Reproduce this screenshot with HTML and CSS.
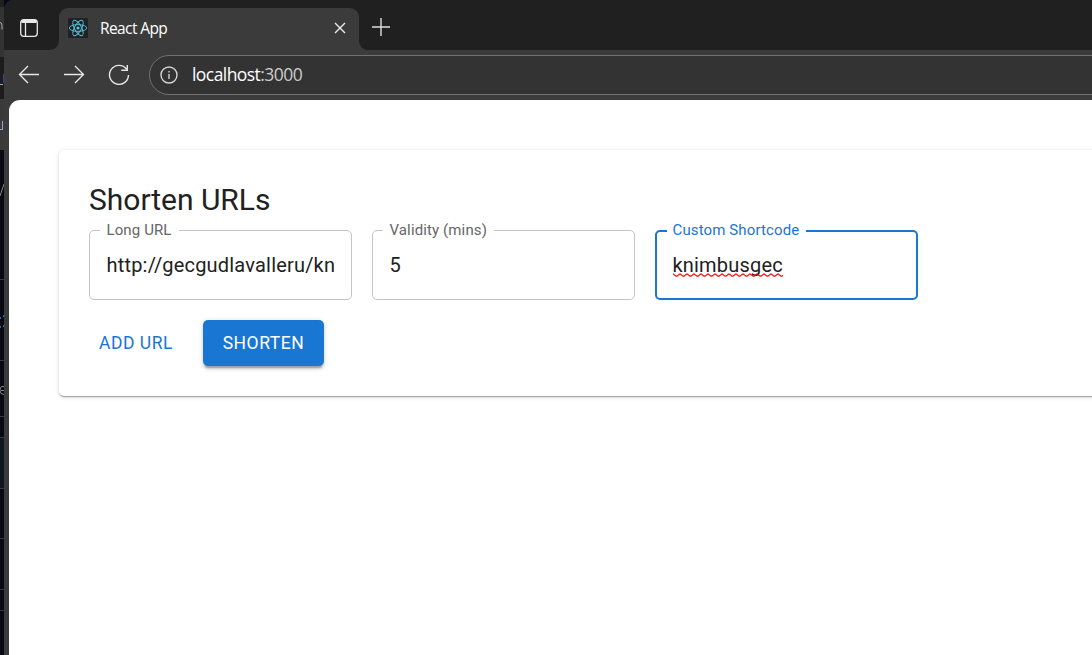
FILE: index.html
```html
<!DOCTYPE html>
<html lang="en">
<head>
<meta charset="utf-8">
<title>React App</title>
<link rel="stylesheet" href="styles.css">
</head>
<body>
<div class="desktop">
  <svg class="backdrop" width="4" height="655" viewBox="0 0 4 655">
    <path fill="#070a10" d="M0 0h4v655H0z"/>
    <path fill="#202020" d="M0 0h4v7H0z"/>
    <path fill="#333" d="M0 7h4v50H0z"/>
    <path fill="#1c1c1f" d="M0 57h4v42H0z"/>
    <path fill="#3a3a3a" d="M0 99h4v51H0z"/>
    <path fill="#10161e" d="M0 437h4v51H0z"/>
    <path stroke="#363a40" d="M0 279.500h4M0 360.500h4M0 416.500h4M0 437.500h4M0 488.500h4M0 538.500h4M0 589.500h4M0 610.500h4"/>
    <path stroke="#aaa" fill="none" d="M0 22.500q2 0 2 3v4M0 84.500h3"/>
    <path stroke="#34449c" fill="none" d="M3.500 74v9"/>
    <path stroke="#8fa6c4" fill="none" d="M0 129.500h2M2.500 121v9"/>
    <path stroke="#888" fill="none" d="M0 196l4-12M4 386.500h-2q-2 0-2 4t4 4M1 390.500h3"/>
    <path stroke="#2f6db8" stroke-width="2" fill="none" d="M0 318h1M3 316h1M0 327h1M3 326h1"/>
  </svg>
  <div class="window">
    <header class="tabs">
      <div class="workspaces">
        <svg width="20" height="20" viewBox="0 0 20 20" fill="none" stroke="#e8e8e8" stroke-width="1.300"><rect x="1.700" y="1.700" width="16.600" height="16.600" rx="3"/><path d="M6.500 5v13"/><path stroke-width="3" d="M2.500 3.500h15"/></svg>
      </div>
      <div class="tab">
        <svg class="favicon" width="20" height="20" viewBox="0 0 20 20" fill="none" stroke="#58c4dc" stroke-width=".9"><rect width="20" height="20" rx="1.500" fill="#202124" stroke="none"/><ellipse cx="10" cy="10" rx="8.700" ry="3.400"/><ellipse cx="10" cy="10" rx="8.700" ry="3.400" transform="rotate(60 10 10)"/><ellipse cx="10" cy="10" rx="8.700" ry="3.400" transform="rotate(120 10 10)"/><circle cx="10" cy="10" r="1.600" fill="#58c4dc" stroke="none"/></svg>
        <span class="tab-title">React App</span>
        <svg class="close" width="12" height="12" viewBox="0 0 12 12" stroke="#eee" stroke-width="1.400"><path d="M1 1l10 10M11 1L1 11"/></svg>
      </div>
      <div class="strip"><svg width="18" height="18" viewBox="0 0 18 18" stroke="#ddd" stroke-width="1.400"><path d="M9 0v18M0 9h18"/></svg></div>
    </header>
    <nav class="toolbar">
      <svg width="22" height="20" viewBox="0 0 22 20" fill="none" stroke="#e6e6e6" stroke-width="1.400"><path d="M21 9.500H1.500M10 1L1.500 9.500l8.500 8.500"/></svg>
      <svg width="22" height="20" viewBox="0 0 22 20" fill="none" stroke="#e6e6e6" stroke-width="1.400"><path d="M1 9.500h19.500M12 1l8.500 8.500-8.500 8.500"/></svg>
      <svg width="22" height="22" viewBox="0 0 22 22" fill="none" stroke="#e6e6e6" stroke-width="1.400"><path d="M18.500 5A9.500 9.500 0 1 0 20.500 11M19.300 1v5.300h-6"/></svg>
      <div class="address">
        <svg width="18" height="18" viewBox="0 0 18 18" fill="none" stroke="#d2d2d2" stroke-width="1.400"><circle cx="9" cy="9" r="8"/><path d="M9 8v5M9 5v1.600"/></svg>
        <span class="url">localhost<span class="port">:3000</span></span>
      </div>
    </nav>
    <main class="page">
      <section class="card">
        <h1 class="heading">Shorten URLs</h1>
        <div class="fields">
          <fieldset class="field"><legend class="label">Long URL</legend><div class="value">http://gecgudlavalleru/kn</div></fieldset>
          <fieldset class="field"><legend class="label">Validity (mins)</legend><div class="value">5</div></fieldset>
          <fieldset class="field focused"><legend class="label">Custom Shortcode</legend><div class="value"><span class="misspelled">knimbusgec<svg class="squiggle" width="110" height="4"><defs><pattern id="wave" width="7" height="4" patternUnits="userSpaceOnUse"><path d="M-1 1L0 .8L3 3.200h1L7 .8l1 0" fill="none" stroke="#f00" stroke-width="1.200"/></pattern></defs><rect width="110" height="4" fill="url(#wave)"/></svg></span></div></fieldset>
        </div>
        <div class="actions"><button class="button text">ADD URL</button><button class="button contained">SHORTEN</button></div>
      </section>
    </main>
  </div>
</div>
</body>
</html>
```
FILE: styles.css
```css
* { box-sizing: border-box; }
body { margin: 0; background: #070a10; font-family: Roboto, sans-serif; overflow: hidden; }
svg { display: block; flex: none; }
.desktop { display: flex; width: 1092px; height: 655px; overflow: hidden; }
.window { flex: 1; min-width: 0; display: flex; flex-direction: column; background: #3b3b3b; border-top-left-radius: 10px; overflow: hidden; }
.tabs { display: flex; height: 50px; background: linear-gradient(#202020 25px, #3b3b3b 25px); }
.workspaces { flex: none; width: 55px; height: 50px; padding: 18px 0 0 15px; background: #202020; border-bottom-right-radius: 9px; }
.tab { display: flex; align-items: center; flex: none; width: 300px; height: 42px; margin-top: 8px; padding: 0 13px 2px 9px; background: #3b3b3b; border-radius: 9px 9px 0 0; }
.tab-title { margin-left: 12px; font: 15.5px/20px "Open Sans", sans-serif; letter-spacing: -.6px; color: #fff; }
.close { margin-left: auto; }
.strip { flex: 1; padding: 18px 0 0 13px; background: #202020; border-bottom-left-radius: 9px; }
.toolbar { display: flex; align-items: center; height: 50px; padding-left: 14px; gap: 23px; }
.address { display: flex; align-items: center; gap: 14px; flex: 1; height: 40px; margin: 0 -30px 0 -4px; padding-left: 10px; background: #333; border: 1px solid #717171; border-radius: 20px; }
.url { margin-top: -2px; font: 17.5px/24px "Open Sans", sans-serif; letter-spacing: -.56px; color: #fff; }
.port { color: #ccc; }
.page { flex: 1; margin-left: 5px; padding: 50px 0 0 50px; background: #fff; border-top-left-radius: 11px; }
.card { width: 1200px; height: 246px; padding: 30px; border-radius: 5px; background: #fff; box-shadow: 0 2px 1px -1px #0003, 0 1px 1px #00000024, 0 1px 4px #0000002b; }
.heading { margin: 0; font-size: 30px; font-weight: 400; line-height: 40px; letter-spacing: -.02px; color: #212121; }
.fields { display: flex; gap: 20px; margin-top: 3px; }
.field { width: 263px; height: 77px; margin: 0; padding: 0 17px 0 10px; border: 1px solid #c4c4c4; border-radius: 5px; min-width: 0; }
.label { padding: 0 7px 0 6.500px; font-size: 15px; line-height: 15px; letter-spacing: .12px; color: #666; }
.value { padding: 13px 0 0 6.500px; font-size: 20px; line-height: 29px; letter-spacing: .19px; color: #212121; white-space: nowrap; }
.focused { border: 2px solid #1976d2; padding-left: 10px; }
.focused .label { padding-left: 5.500px; color: #1976d2; }
.focused .value { padding-left: 5.500px; }
.misspelled { position: relative; display: inline-block; }
.squiggle { position: absolute; left: 0; bottom: 3px; }
.actions { display: flex; gap: 20px; margin-top: 20px; }
.button { height: 46px; border: 0; border-radius: 5px; font: 400 17.5px/30px Roboto, sans-serif; letter-spacing: .5px; white-space: nowrap; }
.text { width: 94px; padding: 0; background: none; color: #1976d2; }
.contained { width: 121px; padding: 0; background: #1976d2; color: #fff; letter-spacing: .55px; box-shadow: 0 3.750px 1.250px -2.500px #0003, 0 2.500px 2.500px #00000024, 0 1.250px 6.250px #0000001f; }
```
